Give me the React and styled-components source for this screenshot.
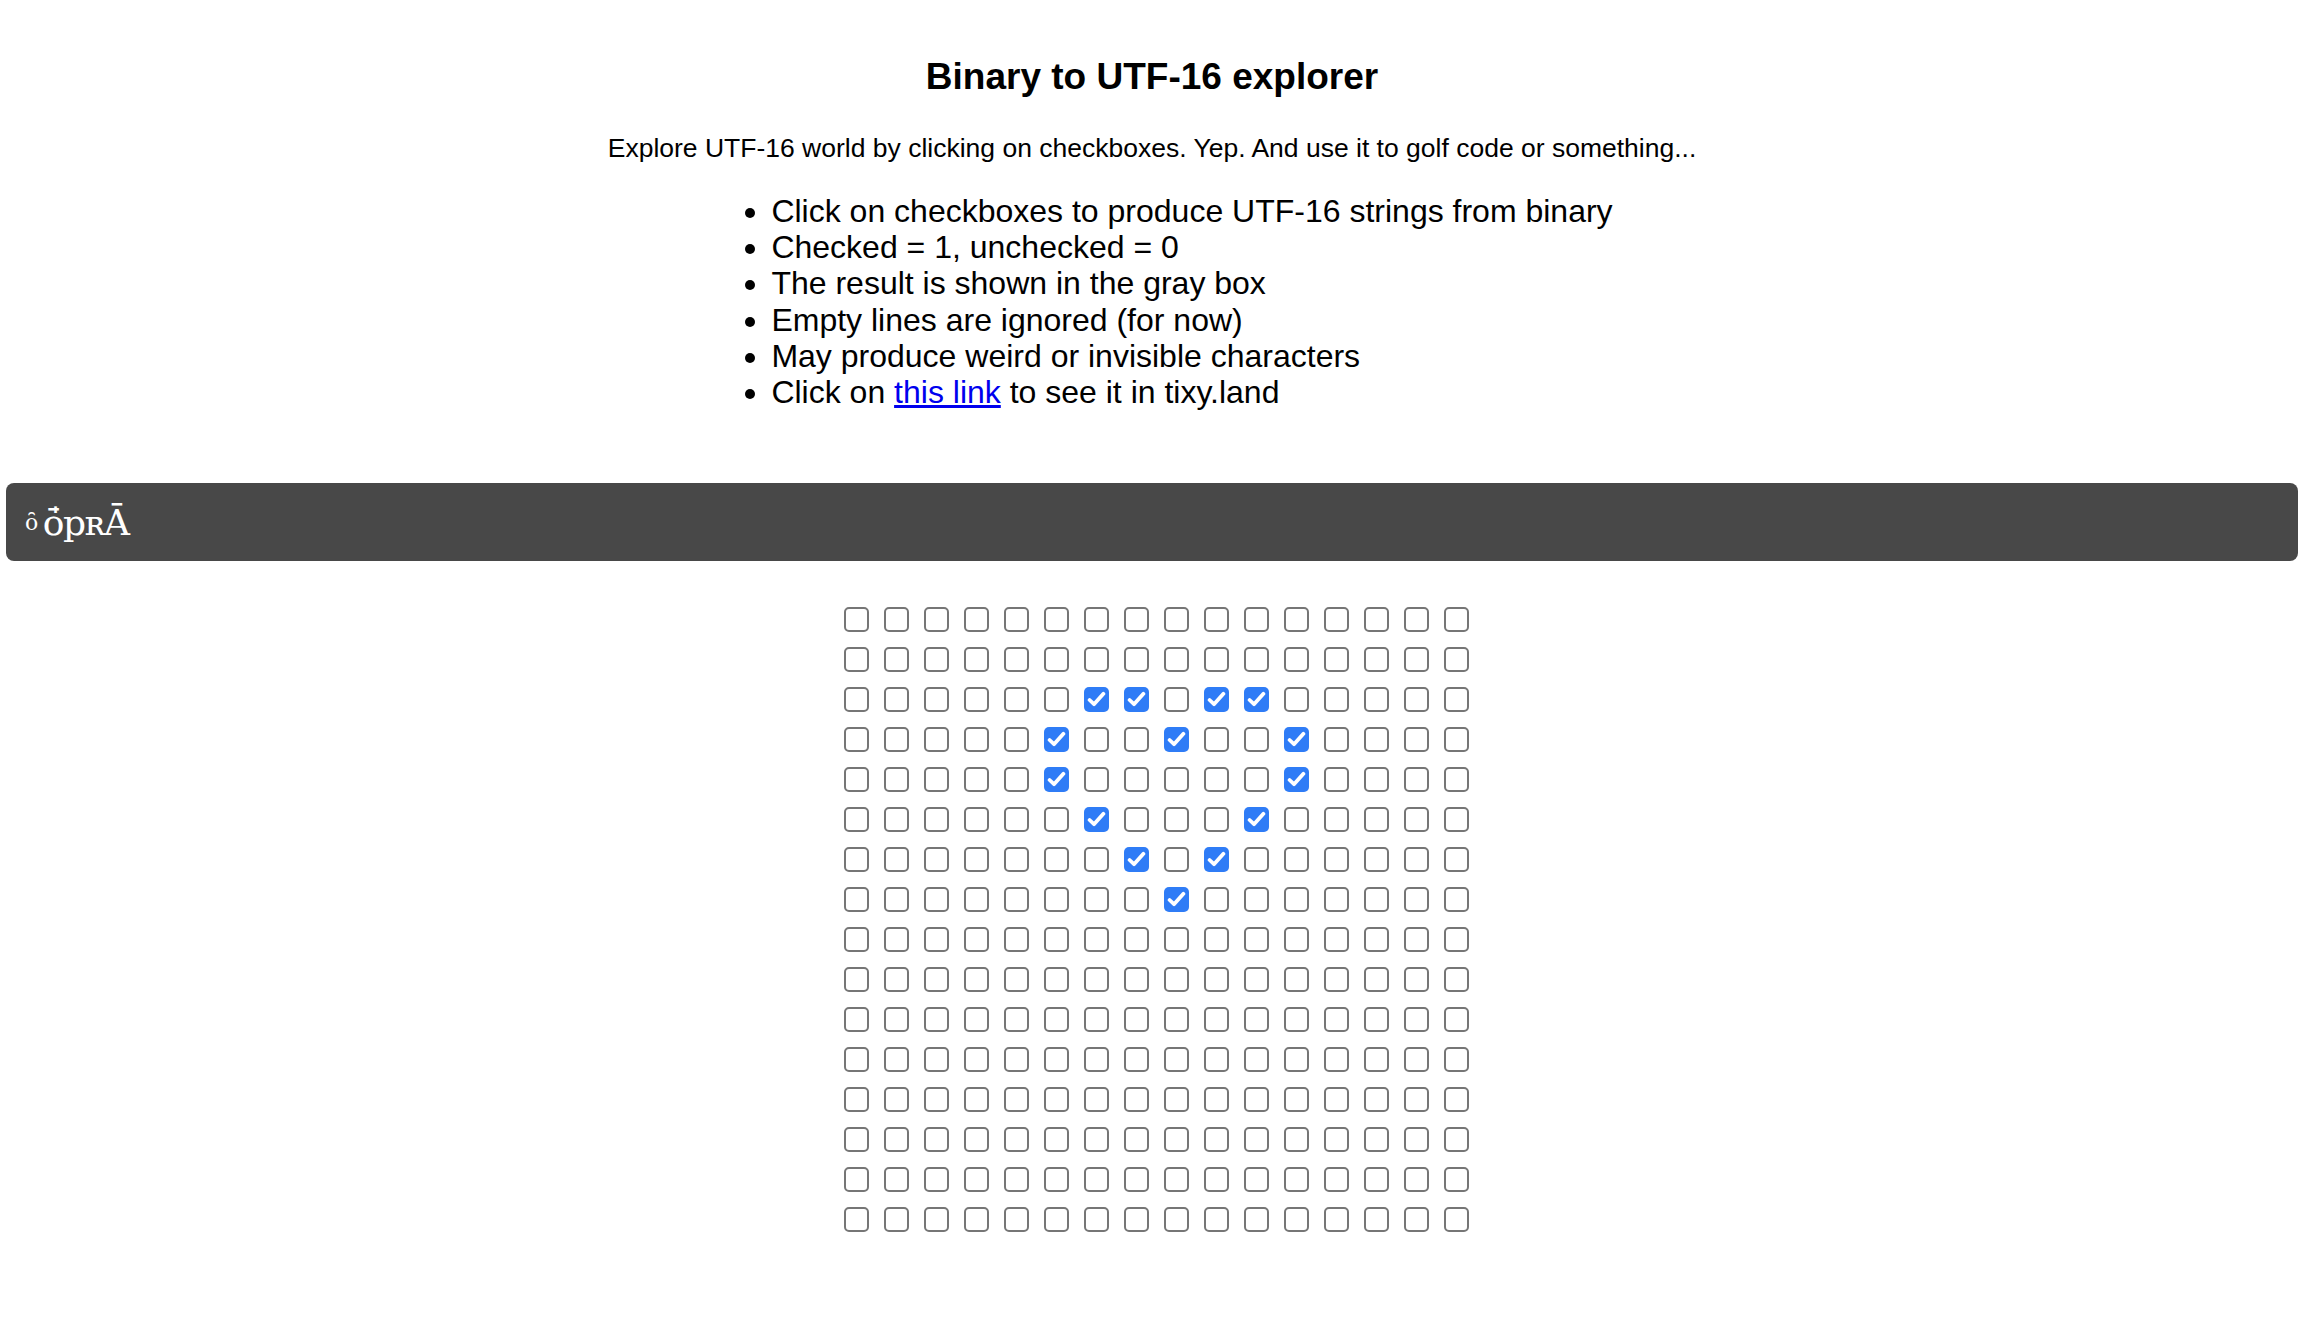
import React, { useState } from "react";
import styled, { createGlobalStyle } from "styled-components";

const GlobalStyle = createGlobalStyle`
  body {
    margin: 0;
    background: #fff;
    font-family: "Liberation Sans", Arial, sans-serif;
    color: #000;
  }
`;

const Page = styled.main`
  padding: 0 6px;
`;

const Intro = styled.header`
  text-align: center;
`;

const Title = styled.h1`
  font-size: 37px;
  font-weight: 700;
  margin: 56px 0 0;
`;

const Lead = styled.p`
  font-size: 26.5px;
  margin: 35px 0 0;
`;

const Rules = styled.ul`
  display: inline-block;
  text-align: left;
  font-size: 32px;
  line-height: 36.2px;
  margin: 29px 0 0;
  padding-left: 80px;
  list-style: disc;
`;

const Link = styled.a`
  color: #0000ee;
  text-decoration: underline;
`;

const Output = styled.div`
  margin-top: 73px;
  height: 78px;
  display: flex;
  align-items: center;
  padding: 0 19px;
  background: #484848;
  border-radius: 8px;
  color: #fff;
  font-family: "DejaVu Serif", "Liberation Serif", serif;
  font-size: 36px;
  letter-spacing: -1.5px;
`;

const Small = styled.span`
  font-size: 22px;
  margin-right: 6px;
`;

const Grid = styled.div`
  display: grid;
  grid-template-columns: repeat(16, 25px);
  gap: 15px;
  justify-content: center;
  padding-left: 9px;
  margin-top: 46px;
  margin-bottom: 100px;
`;

const Box = styled.button`
  width: 25px;
  height: 25px;
  padding: 0;
  box-sizing: border-box;
  border-radius: 5px;
  border: ${(p) => (p.$on ? "none" : "2px solid #767676")};
  background: ${(p) => (p.$on ? "#2f7cf6" : "#fff")};
  display: flex;
  align-items: center;
  justify-content: center;
  cursor: pointer;
`;

const heart = {
  2: [6, 7, 9, 10],
  3: [5, 8, 11],
  4: [5, 11],
  5: [6, 10],
  6: [7, 9],
  7: [8],
};

const initial = Array.from({ length: 16 }, (_, r) =>
  Array.from({ length: 16 }, (_, c) => (heart[r] || []).includes(c))
);

const Check = () => (
  <svg width="19" height="17" viewBox="0 0 19 17">
    <path
      d="M2.6 9 L7 13.2 L16.4 2.8"
      fill="none"
      stroke="#fff"
      strokeWidth="3.8"
      strokeLinecap="round"
      strokeLinejoin="round"
    />
  </svg>
);

export default function App() {
  const [bits, setBits] = useState(initial);

  const toggle = (r, c) =>
    setBits((b) => b.map((row, i) => (i === r ? row.map((v, j) => (j === c ? !v : v)) : row)));

  return (
    <Page>
      <GlobalStyle />
      <Intro>
        <Title>Binary to UTF-16 explorer</Title>
        <Lead>
          Explore UTF-16 world by clicking on checkboxes. Yep. And use it to golf code or something...
        </Lead>
        <Rules>
          <li>Click on checkboxes to produce UTF-16 strings from binary</li>
          <li>Checked = 1, unchecked = 0</li>
          <li>The result is shown in the gray box</li>
          <li>Empty lines are ignored (for now)</li>
          <li>May produce weird or invisible characters</li>
          <li>
            Click on <Link href="#">this link</Link> to see it in tixy.land
          </li>
        </Rules>
      </Intro>
      <Output>
        <Small>ȏ</Small>ō̍pʀĀ
      </Output>
      <Grid>
        {bits.map((row, r) =>
          row.map((on, c) => (
            <Box key={`${r}-${c}`} $on={on} onClick={() => toggle(r, c)}>
              {on && <Check />}
            </Box>
          ))
        )}
      </Grid>
    </Page>
  );
}
